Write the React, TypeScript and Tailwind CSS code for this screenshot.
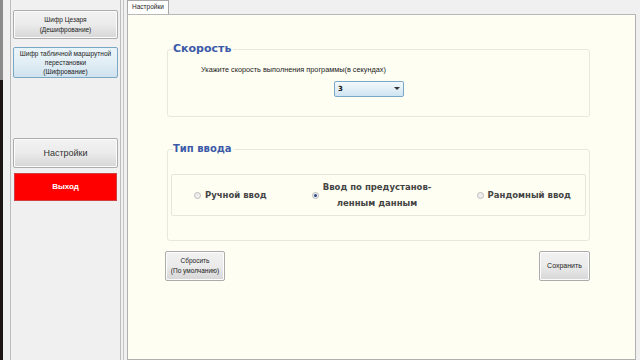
import React, { useState } from 'react';

const btnGray =
  'w-full border border-[#acacac] rounded-[2px] bg-gradient-to-b from-[#f2f2f2] via-[#ebebeb] to-[#d6d6d6] text-[#222] leading-[10px] shadow-[inset_0_0_0_1px_#fcfcfc]';

function Radio({ checked }: { checked?: boolean }) {
  return (
    <span className="w-[7px] h-[7px] rounded-full border border-[#bdbdbd] bg-[#eeeeee] flex items-center justify-center shrink-0">
      {checked && <span className="w-[3px] h-[3px] rounded-full bg-[#2a4a80]" />}
    </span>
  );
}

function App() {
  const [mode, setMode] = useState(1);

  return (
    <div className="w-[640px] h-[360px] flex bg-[#f0f0f0] overflow-hidden font-['Liberation_Sans',sans-serif]">
      <div className="w-[3px] h-full flex flex-col">
        <div className="h-[80px] bg-[#8a8a8a]" />
        <div className="flex-1 bg-[#1e1614]" />
      </div>
      <div className="w-[7px]" />
      {/* left menu */}
      <div className="w-[111px] h-full border-x border-[#bcbcbc] px-[2px] pt-[10px] flex flex-col">
        <button className={btnGray + ' h-[29px] text-[6.5px]'}>
          Шифр Цезаря
          <br />
          (Дешифрование)
        </button>
        <button className="mt-[8px] w-full h-[31px] border border-[#7aa8c4] rounded-[2px] bg-gradient-to-b from-[#eaf5fb] via-[#e2eef5] to-[#cfe2ee] text-[6.5px] leading-[9px] text-[#222]">
          Шифр табличной маршрутной
          <br />
          перестановки
          <br />
          (Шифрование)
        </button>
        <button className={btnGray + ' mt-[60px] h-[30px] text-[9px] text-[#333]'}>Настройки</button>
        <button className="mt-[5px] mx-[1px] h-[28px] bg-[#ff0000] border border-[#d04040] text-white text-[8px] font-bold">
          Выход
        </button>
      </div>
      <div className="w-[2px]" />
      <div className="w-px h-full bg-[#c4c4c4]" />
      <div className="w-[3px]" />
      {/* tab area */}
      <div className="w-[509px] h-full flex flex-col">
        <div className="h-[15px] flex items-end border-b border-[#b8b8b8]">
          <div className="h-[14px] px-[4px] border border-b-0 border-[#a8a8a8] bg-white text-[6.5px] leading-[12px] text-[#222]">
            Настройки
          </div>
        </div>
        <div className="flex-1 bg-[#fefef2] border-x border-b border-[#b0b0b0] pl-[39px] pr-[45px] pt-[28px] font-['DejaVu_Sans',sans-serif]">
          <fieldset className="border border-[#e8e8dc] rounded-[3px] h-[74px] px-[3px]">
            <legend className="ml-[2px] pr-[2px] text-[11px] font-bold text-[#3c5aa8] leading-[12px]">
              Скорость
            </legend>
            <div className="text-[7.3px] text-[#222] pl-[30px] pt-[10px] leading-[9px] font-['Liberation_Sans',sans-serif]">
              Укажите скорость выполнения программы(в секундах)
            </div>
            <div className="pl-[163px] pt-[7px]">
              <div className="w-[70px] h-[16px] border border-[#7ca6c8] rounded-[2px] bg-gradient-to-b from-[#f4f9fc] to-[#cfe4f2] flex items-center justify-between px-[3px]">
                <span className="text-[7px] font-bold text-[#111]">3</span>
                <svg width="6" height="4" viewBox="0 0 6 4">
                  <path d="M0 0 L6 0 L3 3 Z" fill="#333" />
                </svg>
              </div>
            </div>
          </fieldset>
          <fieldset className="mt-[26px] border border-[#e8e8dc] rounded-[3px] h-[98px] px-[3px]">
            <legend className="ml-[2px] pr-[2px] text-[10px] font-bold text-[#3c5aa8] leading-[12px]">
              Тип ввода
            </legend>
            <div className="mt-[19px] h-[42px] border border-[#e6e6da] rounded-[2px] flex items-center text-[8.5px] text-[#444] font-bold whitespace-nowrap">
              <label className="ml-[22px] flex items-center gap-[4px] cursor-pointer" onClick={() => setMode(0)}>
                <Radio checked={mode === 0} />
                <span>Ручной ввод</span>
              </label>
              <label className="ml-[45px] flex items-center gap-[4px] cursor-pointer" onClick={() => setMode(1)}>
                <Radio checked={mode === 1} />
                <span className="text-center leading-[16px]">
                  Ввод по предустанов-
                  <br />
                  ленным данным
                </span>
              </label>
              <label className="ml-auto mr-[14px] flex items-center gap-[4px] cursor-pointer" onClick={() => setMode(2)}>
                <Radio checked={mode === 2} />
                <span>Рандомный ввод</span>
              </label>
            </div>
          </fieldset>
          <div className="mt-[10px] -ml-[2px] flex justify-between font-['Liberation_Sans',sans-serif]">
            <button className={'!w-[60px] h-[30px] text-[6.5px] ' + btnGray}>
              Сбросить
              <br />
              (По умолчанию)
            </button>
            <button className={'!w-[51px] h-[30px] text-[7px] ' + btnGray}>Сохранить</button>
          </div>
        </div>
      </div>
      <div className="flex-1" />
    </div>
  );
}

export default App;
